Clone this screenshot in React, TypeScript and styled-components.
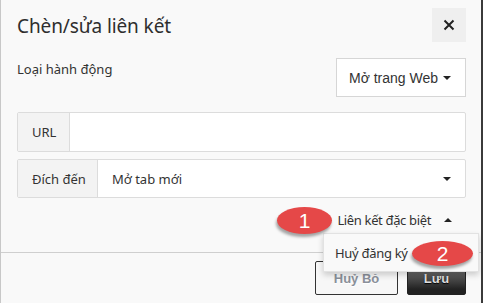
import React from "react";
import styled, { createGlobalStyle } from "styled-components";

const GlobalStyle = createGlobalStyle`
  html, body {
    margin: 0;
    padding: 0;
    background: #f9f9f9;
  }
  * { box-sizing: border-box; }
`;

const segoe = `"Noto Sans", "Open Sans", sans-serif`;
const arial = `"Liberation Sans", Arial, sans-serif`;

const Dialog = styled.div`
  position: relative;
  width: 483px;
  height: 303px;
  background: #f9f9f9;
  border-left: 1px solid #c8c8c8;
  border-right: 2px solid #3a3a3a;
  display: flex;
  flex-direction: column;
  overflow: hidden;
  font-family: ${segoe};
  color: #333;
`;

const Header = styled.div`
  display: flex;
  justify-content: space-between;
  align-items: flex-start;
  padding: 8px 15px 0 16px;
  height: 58px;
`;

const Title = styled.h1`
  margin: 0;
  padding-top: 5px;
  font-size: 19px;
  font-weight: 400;
  letter-spacing: -0.1px;
  color: #2e2e2e;
`;

const CloseButton = styled.button`
  width: 34px;
  height: 34px;
  border: none;
  padding: 0;
  background: #efefef;
  display: flex;
  align-items: center;
  justify-content: center;
`;

const Body = styled.div`
  padding: 0 15px 0 16px;
  display: flex;
  flex-direction: column;
`;

const ActionRow = styled.div`
  display: flex;
  justify-content: space-between;
  align-items: flex-start;
`;

const Label = styled.span`
  font-size: 13px;
  padding-top: 2px;
`;

const Caret = styled.span<{ $up?: boolean }>`
  display: inline-block;
  width: 0;
  height: 0;
  border-left: 4px solid transparent;
  border-right: 4px solid transparent;
  ${(p) => (p.$up ? "border-bottom: 4px solid #222;" : "border-top: 4px solid #222;")}
`;

const SelectBox = styled.div`
  width: 130px;
  height: 39px;
  background: #fff;
  border: 1px solid #d6d6d6;
  display: flex;
  align-items: center;
  justify-content: space-between;
  padding: 0 14px 0 12px;
  font-family: ${arial};
  font-size: 14px;
  color: #333;
`;

const InputGroup = styled.div<{ $top: number; $h: number }>`
  display: flex;
  height: ${(p) => p.$h}px;
  margin-top: ${(p) => p.$top}px;
  border: 1px solid #dcdcdc;
  border-radius: 2px;
  background: #fff;
`;

const Addon = styled.div<{ $w: number }>`
  width: ${(p) => p.$w}px;
  flex-shrink: 0;
  background: #f3f3f3;
  border-right: 1px solid #dcdcdc;
  display: flex;
  align-items: center;
  padding-left: 14px;
  font-size: 13px;
`;

const Field = styled.div`
  flex: 1;
  display: flex;
  align-items: center;
  justify-content: space-between;
  padding: 0 14px 0 14px;
  font-size: 13px;
`;

const SpecialRow = styled.div`
  height: 54px;
  display: flex;
  justify-content: flex-end;
  align-items: center;
  padding-right: 14px;
`;

const Toggle = styled.div`
  display: flex;
  align-items: center;
  gap: 13px;
  font-size: 13px;
  letter-spacing: -0.35px;
  padding-bottom: 10px;
`;

const Footer = styled.div`
  border-top: 1px solid #cfcfcf;
  display: flex;
  justify-content: flex-end;
  gap: 9px;
  padding: 8px 15px 0 0;
  flex: 1;
`;

const Button = styled.button<{ $primary?: boolean }>`
  height: 34px;
  padding: 0;
  border-radius: 2px;
  font-family: ${arial};
  font-weight: 700;
  font-size: 13px;
  ${(p) =>
    p.$primary
      ? `
    width: 59px;
    border: 1px solid #222;
    background: linear-gradient(#8a8a8a, #222 85%);
    color: #ddd;
    text-shadow: 0 1px 1px #000;
  `
      : `
    width: 83px;
    border: 1px solid #333;
    background: #f7f7f7;
    color: #8a909a;
    text-shadow: 0 1px 0 #fff;
  `}
`;

const Menu = styled.div`
  position: absolute;
  left: 322px;
  top: 233px;
  width: 156px;
  height: 39px;
  background: #f9f9f9;
  border: 1px solid #e2e2e2;
  box-shadow: 0 3px 6px rgba(0, 0, 0, 0.18);
  display: flex;
  align-items: center;
  padding-left: 11px;
  font-size: 13px;
  letter-spacing: -0.3px;
`;

const Badge = styled.div<{ $x: number; $y: number; $w: number; $h: number }>`
  position: absolute;
  left: ${(p) => p.$x}px;
  top: ${(p) => p.$y}px;
  width: ${(p) => p.$w}px;
  height: ${(p) => p.$h}px;
  border-radius: 50%;
  background: #e54848;
  box-shadow: -1px 3px 3px rgba(0, 0, 0, 0.35);
  color: #fff;
  font-family: ${arial};
  font-size: 21px;
  display: flex;
  align-items: center;
  justify-content: center;
`;

export default function App() {
  return (
    <>
      <GlobalStyle />
      <Dialog>
        <Header>
          <Title>Chèn/sửa liên kết</Title>
          <CloseButton aria-label="close">
            <svg width="12" height="12" viewBox="0 0 12 12">
              <path d="M1.5 1.5 L10.5 10.5 M10.5 1.5 L1.5 10.5" stroke="#222" strokeWidth="2" />
            </svg>
          </CloseButton>
        </Header>
        <Body>
          <ActionRow>
            <Label>Loại hành động</Label>
            <SelectBox>
              <span>Mở trang Web</span>
              <Caret />
            </SelectBox>
          </ActionRow>
          <InputGroup $top={15} $h={40}>
            <Addon $w={52}>URL</Addon>
            <Field />
          </InputGroup>
          <InputGroup $top={7} $h={39}>
            <Addon $w={80}>Đích đến</Addon>
            <Field>
              <span>Mở tab mới</span>
              <Caret />
            </Field>
          </InputGroup>
          <SpecialRow>
            <Toggle>
              <span>Liên kết đặc biệt</span>
              <Caret $up />
            </Toggle>
          </SpecialRow>
        </Body>
        <Footer>
          <Button>Huỷ Bỏ</Button>
          <Button $primary>Lưu</Button>
        </Footer>
        <Menu>Huỷ đăng ký</Menu>
        <Badge $x={276} $y={207} $w={55} $h={27}>1</Badge>
        <Badge $x={411} $y={241} $w={61} $h={25}>2</Badge>
      </Dialog>
    </>
  );
}
